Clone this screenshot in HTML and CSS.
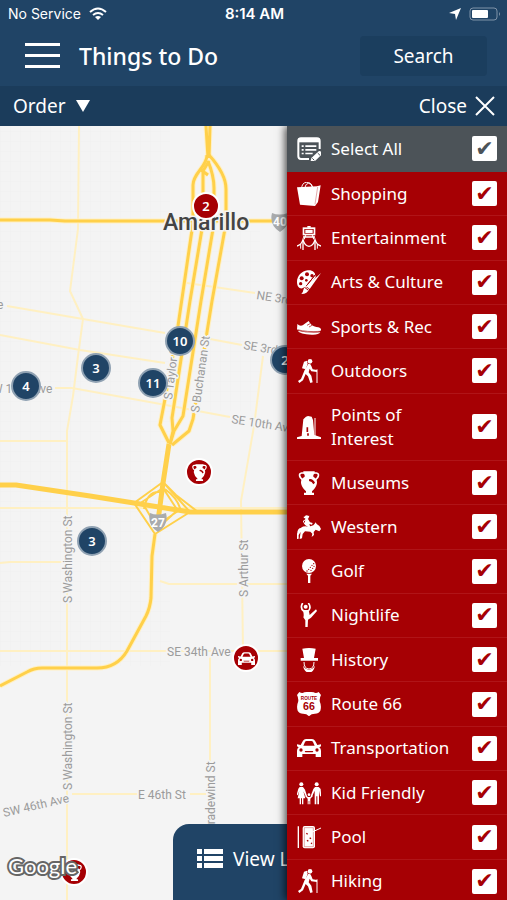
FILE: index.html
```html
<!DOCTYPE html>
<html lang="en">
<head>
    <meta charset="UTF-8">
    <meta name="viewport" content="width=device-width, initial-scale=1.0">
    <title>Things to Do</title>
    <link rel="stylesheet" href="styles.css">
</head>
<body>
    <!-- icons -->
    <svg class="sprite" aria-hidden="true">
        <symbol id="i-all" viewBox="0 0 72 72">
            <path d="M68 36V12q0-8-8-8H12q-8 0-8 8v46q0 8 8 8h24" fill="none" stroke="currentColor" stroke-width="6"/>
            <path d="M4 4h64v12H4z"/>
            <path d="M14 25h6v5h-6zM25 25h33v5H25zM14 36h6v5h-6zM25 36h33v5H25zM14 47h6v5h-6zM25 47h22v5H25z"/>
            <path d="M40 76l3-13 22-20q4-3 8 2t1 8L53 73z"/>
            <path d="M46 64l6 6M62 48l7 7" stroke="#4c5358" stroke-width="3"/>
        </symbol>
        <symbol id="i-shop" viewBox="0 0 72 72">
            <path d="M0 16l60-3 11-3-8 50-9 12-45-4z"/>
            <path d="M14 20Q14 3 28 1t20 17M24 16Q26 5 34 4q9-1 12 11" fill="none" stroke="currentColor" stroke-width="3"/>
            <path d="M62 15l-8 52" stroke="#a60004" stroke-width="1"/>
        </symbol>
        <symbol id="i-ent" viewBox="0 0 72 72">
            <path d="M17 4h38v24H17z"/><path d="M22 9h28v14H22z" fill="#a60004"/><path d="M25 11h22v10H25zM31 0h10v5H31z"/>
            <path d="M26 28L21 40M46 28l5 12M18 33h36M18 44v28M54 44v28" stroke="currentColor" stroke-width="4" fill="none"/>
            <path d="M11 54v14M61 54v14" stroke="currentColor" stroke-width="3"/>
            <path d="M0 60q13-3 18-19 5 19 18 20 13-1 18-20 5 16 18 19" fill="none" stroke="currentColor" stroke-width="4"/>
        </symbol>
        <symbol id="i-art" viewBox="0 0 72 72">
            <path d="M32 1C14 3 0 18 0 36c0 16 10 22 18 18 5-3 10-5 13-2L56 22C57 8 46-1 32 1z"/>
            <path d="M60 8L28 48M60 8L28 48" stroke="#a60004" stroke-width="3"/>
            <path d="M72 9L38 57l-10-8z"/>
            <path d="M26 50l10 8q-4 14-23 14 5-4 6-12 1-8 7-10z"/>
            <path d="M24 53l9 7" stroke="#a60004" stroke-width="3"/>
            <g fill="#a60004"><circle cx="30" cy="13" r="6"/><circle cx="14" cy="25" r="6"/><circle cx="11" cy="41" r="5"/><circle cx="45" cy="17" r="5"/><circle cx="28" cy="31" r="4"/></g>
        </symbol>
        <symbol id="i-shoe" viewBox="0 0 72 72">
            <path d="M1 27q7 7 16 4l18-13q8 16 23 18 15 1 14 9-2 6-17 6Q20 52 0 44z"/>
            <path d="M2 47q30 8 68 5-5 8-26 7Q8 57 2 47z"/>
            <path d="M1 44q28 8 70 5" stroke="#a60004" stroke-width="2" fill="none"/>
            <path d="M30 31l9-5M36 36l9-5" stroke="#a60004" stroke-width="2"/>
        </symbol>
        <symbol id="i-hike" viewBox="0 0 72 72">
            <circle cx="39" cy="7" r="7"/>
            <path d="M21 8l9-3 2 9-6 17-11-3z"/>
            <path d="M34 14q8 0 9 7l4 10 13 2v6l-17-2-5-8-3 11 8 10 4 20-7 2-7-20-7-7-8 19-11 8-4-6 9-6 11-27z"/>
            <path d="M60 31v41" stroke="currentColor" stroke-width="3"/>
        </symbol>
        <symbol id="i-poi" viewBox="0 0 72 72">
            <path d="M0 67l14-4 5-50 8-8 6-2 11 2 4 10 4 45 20 7v5H0z"/>
            <path d="M54 9v54" stroke="currentColor" stroke-width="3"/>
            <path d="M31 37v14M33 55v7" stroke="#a60004" stroke-width="5"/>
        </symbol>
        <symbol id="i-vase" viewBox="0 0 72 72">
            <path d="M19 1h34v6l-4 5v5q12 6 11 19-2 14-15 25v4h6v7H21v-7h6v-4Q14 50 12 36 11 23 23 17v-5l-4-5z"/>
            <path d="M23 6H14Q6 7 8 15q1 6 8 11M49 6h9q8 1 6 9-1 6-8 11" fill="none" stroke="currentColor" stroke-width="5"/>
            <path d="M36 25q10-4 18 10l-5 5q-4-9-13-10z" fill="#a60004"/>
        </symbol>
        <symbol id="i-west" viewBox="0 0 72 72">
            <circle cx="29" cy="7" r="6"/>
            <path d="M20 5l17-3-1 4-15 4z"/>
            <path d="M25 12h8l6 10 8 2-2 5-8-2 3 9-5 10-6-3 3-8-9-6z"/>
            <path d="M28 13l-9 5 4 9" stroke="currentColor" stroke-width="3" fill="none"/>
            <path d="M12 38q9-7 23-3l14-4 4-5 3-4 3 5q10 4 13 15l-5 7-11-5-6 7 1 9-7 6 2-10-6-6-16-1-7 8-2 13-7 2 2-15 1-6-6 9v11l-6 1 1-15z"/>
            <path d="M14 39Q-1 38 1 62q6-5 5-13 1-5 10-5z"/>
        </symbol>
        <symbol id="i-golf" viewBox="0 0 72 72">
            <circle cx="36" cy="21" r="21"/><path d="M28 44h17l-5 6v24h-7V50z"/>
            <g fill="#a60004"><circle cx="50" cy="14" r="2"/><circle cx="45" cy="19" r="2"/><circle cx="51" cy="22" r="2"/><circle cx="40" cy="25" r="2"/><circle cx="47" cy="28" r="2"/><circle cx="35" cy="31" r="2"/><circle cx="42" cy="34" r="2"/><circle cx="30" cy="36" r="2"/></g>
        </symbol>
        <symbol id="i-night" viewBox="0 0 72 72">
            <circle cx="26" cy="11" r="6"/>
            <path d="M17 0Q8 15 20 24M34 0q10 13 0 24" fill="none" stroke="currentColor" stroke-width="5"/>
            <path d="M17 21h18l3 15 19-17 3 5-18 20-9 6-1 23h-7V52l-6-9q3-8-2-22z"/>
        </symbol>
        <symbol id="i-hist" viewBox="0 0 72 72">
            <path d="M16 2q20-4 40 0l-5 28h12v8H11v-8h10z"/>
            <path d="M21 42q0 20 15 21 15-1 15-21" fill="none" stroke="currentColor" stroke-width="3"/>
            <path d="M18 52q3 21 18 22 15-1 18-22-6 13-18 13T18 52z"/>
        </symbol>
        <symbol id="i-66" viewBox="0 0 72 72">
            <path d="M7 0q8 5 15 1l14-2 14 2q7 4 15-1l7 9q-6 11-3 22 5 11 1 25-5 9-16 9-12 0-18 8-6-8-18-8-11 0-16-9-4-14 1-25 3-11-3-22z"/>
            <text x="36" y="25" class="shield-route">ROUTE</text>
            <text x="36" y="55" class="shield-num">66</text>
        </symbol>
        <symbol id="i-car" viewBox="0 0 72 72">
            <path d="M11 27l7-13q3-5 9-5h18q6 0 9 5l7 13 11-2v6l-5 3q5 4 5 10v19H56v-9H16v9H0V44q0-6 5-10l-5-3v-6z"/>
            <path d="M19 29l5-11q1-3 5-3h14q4 0 5 3l5 11z" fill="#a60004"/>
            <path d="M23 45h26l-2 4H25z" fill="#a60004"/>
            <circle cx="12" cy="42" r="5" fill="#a60004"/><circle cx="60" cy="42" r="5" fill="#a60004"/>
        </symbol>
        <symbol id="i-kid" viewBox="0 0 72 72">
            <circle cx="13" cy="10" r="6"/><circle cx="59" cy="10" r="6"/><circle cx="36" cy="41" r="4"/>
            <path d="M8 18h10l6 8 6 19-3 2-8-16 6 21h-6v18h-4V52h-3v18H8V52H2l5-23-5 14-3-2 5-18zM54 18h11l6 6 2 22h-4l-3-17v41h-5V46h-3v24h-5V29l-8 18-4-2 8-21z"/>
            <path d="M27 43l6 5h6l6-5 2 3-7 7v17h-3V60h-2v10h-3V53l-7-7z"/>
        </symbol>
        <symbol id="i-pool" viewBox="0 0 72 72">
            <path d="M4 4v65" stroke="currentColor" stroke-width="4"/>
            <path d="M23 3h25q6 0 6 6v55q0 6-6 6H23q-6 0-6-6V9q0-6 6-6z"/>
            <path d="M22 8v57h27V8z" fill="none" stroke="#a60004" stroke-width="1"/>
            <path d="M28 25l4 3M38 38l4 3M30 46l4 3M42 54l3 2" stroke="#a60004" stroke-width="4"/>
            <path d="M37 25l35-16" stroke="currentColor" stroke-width="3"/>
        </symbol>
    </svg>

    <div class="status">
        <div class="carrier">No Service
            <svg width="18" height="14" viewBox="0 0 18 14"><path d="M1 5Q9-2 17 5M4 8q5-4 10 0" fill="none" stroke="#fff" stroke-width="2"/><path d="M6 10q3-2 6 0l-3 3z" fill="#fff"/></svg>
        </div>
        <div class="time">8:14 AM</div>
        <div class="power">
            <svg width="12" height="12" viewBox="0 0 12 12"><path d="M12 0L7 12 6 6 0 5z" fill="#fff"/></svg>
            <svg width="32" height="14" viewBox="0 0 32 14"><rect x="1" y="1" width="27" height="12" rx="3" fill="none" stroke="#7f93a8"/><rect x="3" y="3" width="16" height="8" rx="1" fill="#fff"/><path d="M30 5q2 2 0 4z" fill="#7f93a8"/></svg>
        </div>
    </div>

    <header class="header">
        <button type="button" class="menu" aria-label="Menu"><span></span><span></span><span></span></button>
        <h1>Things to Do</h1>
        <button type="button" class="search">Search</button>
    </header>

    <div class="toolbar">
        <label class="order">
            <select aria-label="Order"><option>Order</option></select>
            <svg width="14" height="12" viewBox="0 0 14 12"><path d="M0 0h14L7 12z" fill="#fff"/></svg>
        </label>
        <button type="button" class="close">Close
            <svg width="20" height="20" viewBox="0 0 20 20"><path d="M1 1l18 18M19 1L1 19" stroke="#fff" stroke-width="2"/></svg>
        </button>
    </div>

    <main class="content">
        <svg class="map" viewBox="0 125 507 775" preserveAspectRatio="xMinYMin slice">
            <defs>
                <pattern id="blocks" width="10" height="10" patternUnits="userSpaceOnUse"><path d="M0 0H10M0 0V10" stroke="#efeff0" stroke-width="1"/></pattern>
                <!-- interstates -->
                <g id="roads">
                    <path d="M0 219h50l15 1H287M206 125l2 32M210 125l-1 32"/>
                    <path d="M207 154c0 12-14 18-14 30v38L178 325 165 398 160 424 169 442"/>
                    <path d="M209 160l-6 10v52L190 300 172 417 173 430 170 443M201 169l7 5"/>
                    <path d="M208 160q6 15 6 27v35L201 300 183 415 174 430 170 443"/>
                    <path d="M209 154q17 19 17 34v34L212 300 193 418 189 430 172 444"/>
                    <path d="M155 533L152 555 151 597Q150 607 146 615L127 650Q117 667 97 667H42Q34 667 27 671L0 685"/>
                </g>
                <g id="ramps">
                    <path d="M163 481L134 502 155 533 190 511zM163 487l-21 14 14 24 22-15zM169 448l-6 33 13 13 22 17M160 525l20-18q-3-10-15-19M144 508q3-18 16-17"/>
                </g>
            </defs>
            <rect y="125" width="507" height="775" fill="#f4f4f4"/>
            <path d="M0 125h170v540H0zM170 230h90v180h-90z" fill="url(#blocks)"/>

            <!-- streets -->
            <g class="street">
                <path d="M79 125L78 228 70 290 83 318 78 355 73 395 67 430V900"/>
                <path d="M7 305L83 318 165 332M187 282L255 292M0 334L80 349 165 362M55 387h17L155 402 230 416M210 338L242 344"/>
                <path d="M0 440h67M263 355L254 425 241 500 243 650M0 562l10-1h57M160 580l9 3H290M0 650H290"/>
                <path d="M210 655V760M72 793h66M190 793h20M0 507h290"/>
            </g>

            <use href="#roads" class="road-edge"/>
            <use href="#roads" class="road"/>
            <use href="#ramps" class="ramp"/>
            <path class="trunk" d="M169 443L163 482 158 520M0 484H16L90 495 134 502 190 511H290"/>

            <!-- interstate shields -->
            <g class="shield">
                <path d="M150 512q7 3 16 0 3 12-8 19-11-7-8-19zM272 212q7 3 16 0 3 12-8 19-11-7-8-19z"/>
                <text x="158" y="526">27</text>
                <text x="280" y="225">40</text>
            </g>

            <g class="labels">
                <text x="-3" y="308">e</text>
                <text transform="translate(256 298) rotate(9)">NE 3rd Ave</text>
                <text transform="translate(243 348) rotate(9)">SE 3rd Ave</text>
                <text transform="translate(231 422) rotate(9)">SE 10th Ave</text>
                <text x="-8" y="392">W 10th Ave</text>
                <text transform="translate(172 399) rotate(-83)">S Taylor St</text>
                <text transform="translate(199 412) rotate(-82)">S Buchanan St</text>
                <text transform="translate(72 602) rotate(-90)">S Washington St</text>
                <text transform="translate(72 789) rotate(-90)">S Washington St</text>
                <text transform="translate(248 596) rotate(-90)">S Arthur St</text>
                <text transform="translate(215 830) rotate(-90)">Tradewind St</text>
                <text x="167" y="655">SE 34th Ave</text>
                <text x="138" y="798">E 46th St</text>
                <text transform="translate(4 816) rotate(-13)">SW 46th Ave</text>
            </g>
            <text class="city" x="163" y="229">Amarillo</text>
        </svg>

        <button type="button" class="pin red p1">2</button>
        <button type="button" class="pin p2">10</button>
        <button type="button" class="pin p3">3</button>
        <button type="button" class="pin p4">11</button>
        <button type="button" class="pin p5">4</button>
        <button type="button" class="pin p6">2</button>
        <button type="button" class="pin p7">3</button>
        <button type="button" class="pin red p8" aria-label="Museum"><svg><use href="#i-vase"/></svg></button>
        <button type="button" class="pin red p9" aria-label="Transportation"><svg><use href="#i-car"/></svg></button>
        <button type="button" class="pin red p10" aria-label="Museum"><svg><use href="#i-vase"/></svg></button>
        <div class="google">Google</div>

        <button type="button" class="view-list">
            <svg width="26" height="20" viewBox="0 0 26 20"><path d="M0 0h5v5H0zM7 0h19v5H7zM0 7h5v5H0zM7 7h19v5H7zM0 14h5v5H0zM7 14h19v5H7z" fill="#fff"/></svg>
            View List
        </button>

        <aside class="panel">
            <ul>
                <li class="all"><label><svg><use href="#i-all"/></svg><span>Select All</span><input type="checkbox" checked></label></li>
                <li><label><svg><use href="#i-shop"/></svg><span>Shopping</span><input type="checkbox" checked></label></li>
                <li><label><svg><use href="#i-ent"/></svg><span>Entertainment</span><input type="checkbox" checked></label></li>
                <li><label><svg><use href="#i-art"/></svg><span>Arts &amp; Culture</span><input type="checkbox" checked></label></li>
                <li><label><svg><use href="#i-shoe"/></svg><span>Sports &amp; Rec</span><input type="checkbox" checked></label></li>
                <li><label><svg><use href="#i-hike"/></svg><span>Outdoors</span><input type="checkbox" checked></label></li>
                <li><label><svg><use href="#i-poi"/></svg><span>Points of<br>Interest</span><input type="checkbox" checked></label></li>
                <li><label><svg><use href="#i-vase"/></svg><span>Museums</span><input type="checkbox" checked></label></li>
                <li><label><svg><use href="#i-west"/></svg><span>Western</span><input type="checkbox" checked></label></li>
                <li><label><svg><use href="#i-golf"/></svg><span>Golf</span><input type="checkbox" checked></label></li>
                <li><label><svg><use href="#i-night"/></svg><span>Nightlife</span><input type="checkbox" checked></label></li>
                <li><label><svg><use href="#i-hist"/></svg><span>History</span><input type="checkbox" checked></label></li>
                <li><label><svg><use href="#i-66"/></svg><span>Route 66</span><input type="checkbox" checked></label></li>
                <li><label><svg><use href="#i-car"/></svg><span>Transportation</span><input type="checkbox" checked></label></li>
                <li><label><svg><use href="#i-kid"/></svg><span>Kid Friendly</span><input type="checkbox" checked></label></li>
                <li><label><svg><use href="#i-pool"/></svg><span>Pool</span><input type="checkbox" checked></label></li>
                <li><label><svg><use href="#i-hike"/></svg><span>Hiking</span><input type="checkbox" checked></label></li>
            </ul>
        </aside>
    </main>
</body>
</html>
```
FILE: styles.css
```css
* {
    box-sizing: border-box;
}
body {
    display: flex;
    flex-direction: column;
    height: 100vh;
    margin: 0;
    overflow: hidden;
    font-family: "Noto Sans", sans-serif;
    font-size: 17px;
    line-height: 24px;
    color: #fff;
    background: #204466;
}
button, select, input {
    margin: 0;
    padding: 0;
    border: 0;
    font: inherit;
    color: inherit;
    background: none;
    appearance: none;
}
svg {
    flex: none;
    fill: currentColor;
}
.sprite {
    position: absolute;
    width: 0;
    height: 0;
}

/* top bars */
.status {
    display: grid;
    grid-template-columns: 1fr auto 1fr;
    align-items: center;
    height: 28px;
    padding: 0 6px 0 8px;
    font-family: Inter, sans-serif;
    font-size: 14px;
}
.carrier, .power {
    display: flex;
    align-items: center;
    gap: 8px;
}
.power {
    justify-content: flex-end;
}
.time {
    font-size: 15px;
    font-weight: 600;
}
.header {
    display: flex;
    align-items: center;
    height: 58px;
    padding: 0 20px 3px 25px;
}
.menu {
    display: flex;
    flex-direction: column;
    gap: 8px;
    width: 35px;
    margin-right: 19px;
}
.menu span {
    height: 3px;
    background: #fff;
}
.header h1 {
    flex: 1;
    margin: 0;
    font-size: 23px;
    font-weight: 500;
}
.search {
    width: 127px;
    height: 40px;
    border-radius: 4px;
    font-size: 19px;
    background: #1b3e5e;
}
.toolbar {
    display: flex;
    justify-content: space-between;
    align-items: center;
    height: 40px;
    padding: 0 12px 0 13px;
    font-size: 19px;
    background: #1b3c5b;
}
.order, .close {
    display: flex;
    align-items: center;
    gap: 10px;
}
.order select {
    field-sizing: content;
}
.close {
    gap: 8px;
}

/* map */
.content {
    position: relative;
    flex: 1;
    min-height: 0;
    overflow: hidden;
    background: #f4f4f4;
}
.map {
    display: block;
    width: 100%;
    height: 100%;
    font-family: Roboto, sans-serif;
}
.street {
    fill: none;
    stroke: #fff0c2;
    stroke-width: 2px;
}
.road-edge, .road, .ramp, .trunk {
    fill: none;
    stroke: #ffd04a;
    stroke-width: 3px;
    stroke-linejoin: round;
}
.road-edge {
    stroke: #fff0c2;
    stroke-width: 5px;
}
.ramp {
    stroke-width: 2px;
}
.trunk {
    stroke-width: 5px;
}
.shield {
    fill: #a9abad;
    font-size: 12px;
    font-weight: 700;
    text-anchor: middle;
}
.shield text {
    fill: #fff;
}
.labels {
    fill: #9b9b9b;
    stroke: #f4f4f4;
    stroke-width: 3px;
    paint-order: stroke;
    font-size: 12px;
}
.city {
    fill: #444;
    stroke: #f4f4f4;
    stroke-width: 3px;
    paint-order: stroke;
    font-size: 23px;
    font-weight: 500;
}
.pin {
    display: flex;
    justify-content: center;
    align-items: center;
    position: absolute;
    width: 30px;
    height: 30px;
    margin: -15px 0 0 -15px;
    border: 2px solid #8fa1b2;
    border-radius: 50%;
    font-size: 13px;
    font-weight: 600;
    background: #204466;
}
.pin.red {
    width: 28px;
    height: 28px;
    margin: -14px 0 0 -14px;
    border-color: #fff;
    background: #a60004;
}
.pin svg {
    width: 17px;
    height: 17px;
}
.p1 { left: 206px; top: 80px; }
.p2 { left: 180px; top: 215px; }
.p3 { left: 96px; top: 242px; }
.p4 { left: 153px; top: 257px; }
.p5 { left: 26px; top: 260px; }
.p6 { left: 285px; top: 234px; }
.p7 { left: 92px; top: 415px; }
.p8 { left: 199px; top: 346px; }
.p9 { left: 246px; top: 532px; }
.p10 { left: 74px; top: 746px; }
.google {
    position: absolute;
    left: 8px;
    bottom: 22px;
    font-family: Lato, sans-serif;
    font-size: 22px;
    -webkit-text-stroke: 4px #666;
    paint-order: stroke fill;
}
.view-list {
    display: flex;
    align-items: center;
    gap: 10px;
    position: absolute;
    left: 173px;
    bottom: 0;
    width: 160px;
    height: 76px;
    padding: 0 0 6px 24px;
    border-radius: 16px 16px 0 0;
    font-size: 19px;
    white-space: nowrap;
    background: #204466;
}

/* categories */
.panel {
    position: absolute;
    top: 0;
    right: 0;
    width: 220px;
    height: 100%;
    background: #a60004;
    box-shadow: -2px 0 8px rgba(0, 0, 0, 0.7);
}
.panel ul {
    display: flex;
    flex-direction: column;
    height: calc(100% + 4px);
    margin: 0;
    padding: 0;
    list-style: none;
}
.panel li {
    display: flex;
    flex: 1 0 auto;
    min-height: 44px;
    border-bottom: 1px solid #b01418;
}
.panel li.all {
    min-height: 46px;
    border-color: #4c5358;
    background: #4c5358;
}
.panel label {
    display: flex;
    flex: 1;
    align-items: center;
    gap: 10px;
    padding: 9px 10px;
}
.panel label svg {
    width: 24px;
    height: 24px;
    overflow: visible;
}
.panel span {
    flex: 1;
}
.panel input {
    display: flex;
    justify-content: center;
    align-items: center;
    width: 25px;
    height: 25px;
    border-radius: 2px;
    color: #a60004;
    background: #fff;
}
.panel .all input {
    color: #4c5358;
}
.panel input:checked::before {
    content: "✔";
    font-family: "DejaVu Sans", sans-serif;
    font-size: 22px;
}
.shield-route, .shield-num {
    fill: #a60004;
    font-family: "Liberation Sans", sans-serif;
    font-size: 14px;
    font-weight: 700;
    text-anchor: middle;
}
.shield-num {
    font-size: 32px;
}
```
